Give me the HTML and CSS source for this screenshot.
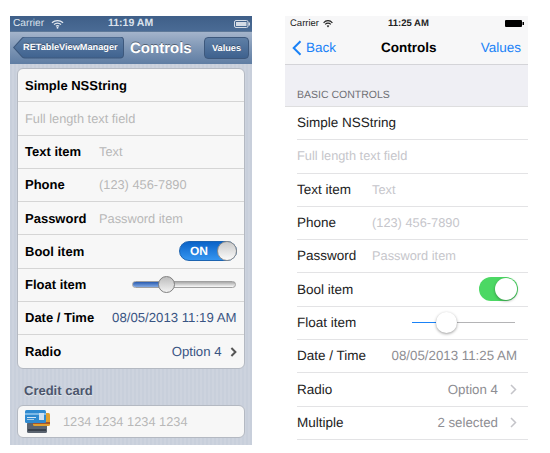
FILE: index.html
```html
<!DOCTYPE html>
<html lang="en">
<head>
<meta charset="utf-8">
<title>RETableViewManager Controls</title>
<link rel="stylesheet" href="styles.css">
</head>
<body>
<main class="stage">
  <section class="old">
    <div class="old-status">
      <span class="old-carrier">Carrier</span>
      <svg class="old-wifi" width="13" height="10" viewBox="0 0 14 10"><path d="M1 3.600C4.400.6 9.600.6 13 3.600M3.200 5.600c2.200-1.900 5.400-1.900 7.600 0M5.300 7.500c1-.8 2.400-.8 3.400 0" fill="none" stroke="#e6ebf2" stroke-width="1.300"/><circle cx="7" cy="9" r="1" fill="#e6ebf2"/></svg>
      <span class="old-time">11:19 AM</span>
      <svg class="old-batt" width="16" height="8" viewBox="0 0 16 8"><rect x=".5" y=".5" width="13.500" height="7" rx="1.500" fill="none" stroke="#d5dce6"/><rect x="2" y="2" width="10.500" height="4" fill="#d5dce6"/><rect x="14.500" y="2.500" width="1.500" height="3" fill="#d5dce6"/></svg>
    </div>
    <div class="old-nav">
      <span class="old-back"><span class="old-back-text">RETableViewManager</span></span>
      <span class="old-title">Controls</span>
      <span class="old-btn">Values</span>
    </div>
    <div class="old-body">
      <div class="old-card">
        <div class="old-row"><b>Simple NSString</b></div>
        <div class="old-row"><span class="old-ph">Full length text field</span></div>
        <div class="old-row"><b class="old-label">Text item</b><span class="old-ph">Text</span></div>
        <div class="old-row"><b class="old-label">Phone</b><span class="old-ph">(123) 456-7890</span></div>
        <div class="old-row"><b class="old-label">Password</b><span class="old-ph">Password item</span></div>
        <div class="old-row"><b>Bool item</b>
          <span class="old-switch"><span class="old-on">ON</span><i class="old-knob"></i></span>
        </div>
        <div class="old-row"><b>Float item</b>
          <span class="old-slider"><i class="old-fill"></i><i class="old-thumb"></i></span>
        </div>
        <div class="old-row"><b>Date / Time</b><span class="old-val">08/05/2013 11:19 AM</span></div>
        <div class="old-row"><b>Radio</b><span class="old-val">Option 4</span>
          <svg class="old-chev" width="7" height="10" viewBox="0 0 7 10"><path d="M1.400 1l4 4-4 4" fill="none" stroke="#555" stroke-width="2"/></svg>
        </div>
      </div>
      <h2 class="old-head">Credit card</h2>
      <div class="old-card old-cc">
        <svg class="cc-icon" width="25" height="23" viewBox="0 0 25 23">
          <rect x="2" y="12" width="20" height="11" rx="1.500" fill="#5b6470"/>
          <rect x="3" y="19" width="18" height="2" fill="#39414c"/>
          <rect x="8" y="3" width="17" height="13" rx="1.500" fill="#e0a030"/>
          <rect x="8" y="12" width="17" height="2" fill="#a5562e"/>
          <rect x="0" y="0" width="21" height="13" rx="1.500" fill="#2f8ad0"/>
          <rect x="0" y="3" width="21" height="2" fill="#7db9e6"/>
          <rect x="14" y="3" width="5" height="7" fill="#cfe0f0"/>
          <rect x="2" y="7" width="9" height="1" fill="#d5e7f5"/>
          <rect x="2" y="9" width="7" height="1" fill="#a9cdea"/>
        </svg>
        <span class="old-ph">1234 1234 1234 1234</span>
      </div>
    </div>
  </section>

  <section class="new">
    <div class="new-top">
      <div class="new-status">
        <span class="new-carrier">Carrier</span>
        <svg class="new-wifi" width="10" height="8" viewBox="0 0 10 8"><path d="M.6 2.800C3-.1 7-.1 9.400 2.800M2.200 4.400c1.600-1.700 4-1.700 5.600 0" fill="none" stroke="#222" stroke-width="1.100"/><path d="M3.700 5.800c.8-.8 1.800-.8 2.600 0L5 7.500z" fill="#222"/></svg>
        <span class="new-time">11:25 AM</span>
        <svg class="new-batt" width="19" height="7" viewBox="0 0 19 7"><rect width="17" height="7" rx="1" fill="#000"/><rect x="17.500" y="2" width="1.500" height="3" fill="#000"/></svg>
      </div>
      <div class="new-nav">
        <span class="new-back">
          <svg width="10" height="16" viewBox="0 0 10 16"><path d="M8.500 1.200L1.700 8l6.800 6.800" fill="none" stroke="#1a82f7" stroke-width="2"/></svg>
          Back
        </span>
        <span class="new-title">Controls</span>
        <span class="new-values">Values</span>
      </div>
    </div>
    <h2 class="new-head">BASIC CONTROLS</h2>
    <div class="new-list">
      <div class="new-row">Simple NSString</div>
      <div class="new-row"><span class="new-ph">Full length text field</span></div>
      <div class="new-row"><span class="new-label">Text item</span><span class="new-ph">Text</span></div>
      <div class="new-row"><span class="new-label">Phone</span><span class="new-ph">(123) 456-7890</span></div>
      <div class="new-row"><span class="new-label">Password</span><span class="new-ph">Password item</span></div>
      <div class="new-row">Bool item<span class="new-switch"><i class="new-knob"></i></span></div>
      <div class="new-row">Float item<span class="new-slider"><i class="new-fill"></i><i class="new-thumb"></i></span></div>
      <div class="new-row">Date / Time<span class="new-val">08/05/2013 11:25 AM</span></div>
      <div class="new-row">Radio<span class="new-val">Option 4</span>
        <svg class="new-chev" width="7" height="11" viewBox="0 0 7 11"><path d="M1 1l4.500 4.500L1 10" fill="none" stroke="#c4c4c9" stroke-width="1.500"/></svg>
      </div>
      <div class="new-row">Multiple<span class="new-val">2 selected</span>
        <svg class="new-chev" width="7" height="11" viewBox="0 0 7 11"><path d="M1 1l4.500 4.500L1 10" fill="none" stroke="#c4c4c9" stroke-width="1.500"/></svg>
      </div>
    </div>
  </section>
</main>
</body>
</html>
```

FILE: styles.css
```css
* { box-sizing: border-box; }
html, body { margin: 0; background: #fff; }
body { font-family: "Liberation Sans", Arial, sans-serif; text-rendering: geometricPrecision; }
i { display: block; }
h2 { margin: 0; }

.stage {
  display: flex;
  gap: 33px;
  width: 550px;
  height: 453px;
  padding: 16px 22px 0 10px;
  overflow: hidden;
}

/* iOS 6 column */
.old {
  width: 242px;
  height: 429px;
  display: flex;
  flex-direction: column;
  flex: none;
}
.old-status {
  height: 15px;
  display: flex;
  align-items: center;
  padding: 0 2px 0 3px;
  background: linear-gradient(#3f5f88, #4a6b95);
  color: #dbe2ec;
  font-size: 10.200px;
  position: relative;
}
.old-carrier { margin-right: 7px; }
.old-time { position: absolute; left: 98px; top: 1px; font-size: 10.500px; font-weight: bold; line-height: 13px; }
.old-batt { margin-left: auto; }
.old-nav {
  height: 33px;
  display: flex;
  align-items: center;
  background: linear-gradient(#a4b4cb 0%, #7e96b5 50%, #5f7da3 100%);
  border-top: 1px solid #5d7898;
  padding: 0 3px 0 3px;
  color: #fff;
}
.old-back {
  width: 111px;
  height: 22px;
  margin-top: -1px;
  position: relative;
  flex: none;
  background: #3d587c;
  clip-path: path("M0 11L9 1Q10 0 12 0H107Q111 0 111 4V18Q111 22 107 22H12Q10 22 9 21Z");
}
.old-back::before {
  content: "";
  position: absolute;
  inset: 0;
  background: linear-gradient(#5f7fa6, #3e618e);
  clip-path: path("M1.400 11L9.800 1.700Q10.400 1 12 1H107Q110 1 110 4V18Q110 21 107 21H12Q10.400 21 9.800 20.300Z");
}
.old-back-text {
  position: absolute;
  left: 10px;
  top: 0;
  line-height: 21px;
  font-size: 9.200px;
  font-weight: bold;
  text-shadow: 0 -1px 0 rgba(0,0,0,.35);
  white-space: nowrap;
}
.old-title {
  margin-left: 6px;
  font-size: 15px;
  font-weight: bold;
  text-shadow: 0 -1px 0 rgba(0,0,0,.4);
  white-space: nowrap;
}
.old-btn {
  margin-left: auto;
  width: 45px;
  height: 22px;
  margin-top: -1px;
  line-height: 20px;
  text-align: center;
  font-size: 9.200px;
  font-weight: bold;
  background: linear-gradient(#5f7fa6, #3e618e);
  border: 1px solid #3d587c;
  border-radius: 4px;
  text-shadow: 0 -1px 0 rgba(0,0,0,.35);
}
.old-body {
  flex: 1;
  padding: 4px 7px 0;
  background: repeating-linear-gradient(90deg, #c8cfdb 0 2px, #cdd3de 2px 4px);
}
.old-card {
  background: #f7f7f7;
  border: 1px solid #b4b9c2;
  border-radius: 6px;
}
.old-row {
  height: 33.250px;
  display: flex;
  align-items: center;
  padding: 0 7.500px 0 7px;
  font-size: 13px;
  color: #000;
  border-bottom: 1px solid #d5d5d5;
  white-space: nowrap;
}
.old-row:last-child { border-bottom: 0; }
.old-label { width: 74px; flex: none; }
.old-ph { color: #b8b8b8; font-size: 12.800px; }
.old-val { margin-left: auto; color: #395483; font-size: 13.200px; }
.old-chev { margin-left: 8px; flex: none; }
.old-switch {
  margin-left: auto;
  margin-right: -.5px;
  width: 58px;
  height: 20px;
  border-radius: 10px;
  background: linear-gradient(#0a63c8, #3595f0);
  border: 1px solid #1c63b0;
  color: #fff;
  font-size: 12px;
  font-weight: bold;
  display: flex;
  align-items: center;
  position: relative;
}
.old-on { margin-left: 10px; }
.old-knob {
  position: absolute;
  right: -1px;
  top: -1px;
  width: 20px;
  height: 20px;
  border-radius: 50%;
  background: linear-gradient(#c9c9c9, #fbfbfb);
  border: 1px solid #8c8c8c;
}
.old-slider {
  margin-left: auto;
  margin-right: .5px;
  width: 104.500px;
  height: 7px;
  border-radius: 4px;
  background: linear-gradient(#a9a9a9, #fafafa);
  border: 1px solid #a0a0a0;
  position: relative;
}
.old-fill {
  width: 30px;
  height: 100%;
  border-radius: 3px 0 0 3px;
  background: linear-gradient(#2a5cb0, #83a9e2);
}
.old-thumb {
  position: absolute;
  left: 25px;
  top: -6px;
  width: 17px;
  height: 17px;
  border-radius: 50%;
  background: linear-gradient(#bdbdbd, #f2f2f2);
  border: 1px solid #808080;
}
.old-head {
  margin: 14px 0 7px 7px;
  font-size: 13px;
  line-height: 15px;
  font-weight: bold;
  color: #4c566c;
  text-shadow: 0 1px 0 #e4e8ee;
}
.old-cc {
  height: 33px;
  display: flex;
  align-items: center;
  padding-left: 7px;
  font-size: 13px;
}
.cc-icon { margin-right: 13px; flex: none; }

/* iOS 7 column */
.new {
  width: 243px;
  flex: none;
  display: flex;
  flex-direction: column;
}
.new-top {
  height: 49px;
  background: #f7f7f8;
  border-bottom: 1px solid #d4d4d8;
}
.new-status {
  height: 15px;
  display: flex;
  align-items: center;
  padding: 0 4px 0 5px;
  font-size: 9.500px;
  color: #222;
  position: relative;
}
.new-carrier { margin-right: 4px; }
.new-time { position: absolute; left: 103px; top: 1px; line-height: 13px; font-weight: bold; font-size: 9.500px; }
.new-batt { margin-left: auto; }
.new-nav {
  height: 33px;
  display: flex;
  align-items: center;
  justify-content: space-between;
  padding: 0 7px 0 7px;
  font-size: 13.500px;
  color: #1a82f7;
  position: relative;
}
.new-back { display: flex; align-items: center; gap: 4px; }
.new-title {
  position: absolute;
  left: 96px;
  font-weight: bold;
  font-size: 13.500px;
  color: #000;
}
.new-head {
  height: 42px;
  padding: 23px 0 0 12px;
  font-size: 10.500px;
  line-height: 14px;
  font-weight: normal;
  color: #707075;
  background: #efeff4;
  border-bottom: 1px solid #dededf;
}
.new-list { padding-left: 12px; }
.new-row {
  height: 33.300px;
  display: flex;
  align-items: center;
  padding: 0 11px 1px 0;
  font-size: 13.500px;
  color: #222;
  border-bottom: 1px solid #e3e3e5;
  white-space: nowrap;
}
.new-label { width: 75px; flex: none; }
.new-ph { color: #c6c6cb; font-size: 12.800px; }
.new-val { margin-left: auto; color: #8e8e93; font-size: 13.300px; }
.new-chev { margin-left: 12px; flex: none; }
.new-switch {
  margin-left: auto;
  margin-right: -1px;
  width: 39px;
  height: 24px;
  border-radius: 12px;
  background: #4cd864;
  position: relative;
}
.new-knob {
  position: absolute;
  right: 1px;
  top: 1px;
  width: 22px;
  height: 22px;
  border-radius: 50%;
  background: #fff;
  box-shadow: 0 1px 3px rgba(0,0,0,.35);
}
.new-slider {
  margin-left: auto;
  margin-right: 2px;
  width: 103px;
  height: 1px;
  background: #b4b4b6;
  position: relative;
}
.new-fill { width: 25px; height: 100%; background: #1a82f7; }
.new-thumb {
  position: absolute;
  left: 24px;
  top: -10px;
  width: 21px;
  height: 21px;
  border-radius: 50%;
  background: #fff;
  box-shadow: 0 1px 3px rgba(0,0,0,.4);
}
```
